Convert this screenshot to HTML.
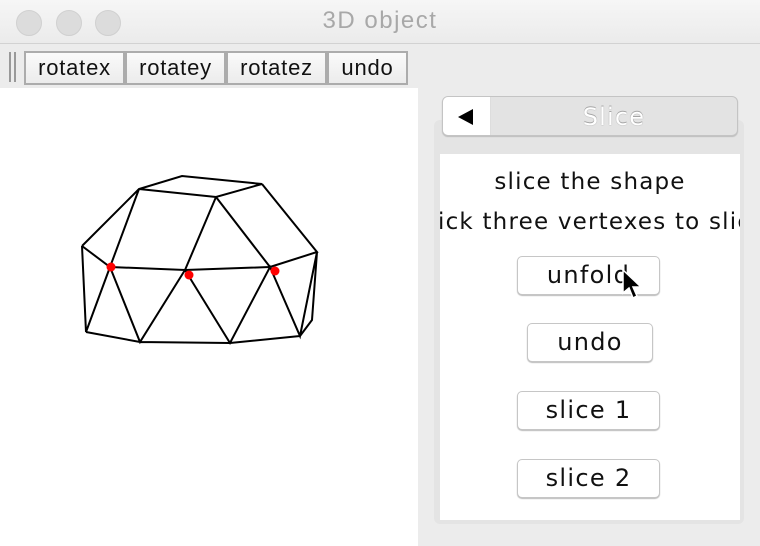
<!DOCTYPE html>
<html><head><style>
body{margin:0;width:760px;height:546px;background:#ececec;font-family:"Liberation Sans",sans-serif;position:relative;overflow:hidden}
.abs{position:absolute}
.title{left:0;top:0;width:760px;height:43px;background:linear-gradient(#f6f6f6,#ebebeb);border-bottom:1px solid #d2d2d2}
.dot{top:10px;width:24px;height:24px;border-radius:50%;background:#dcdcdc;border:1px solid #d0d0d0}
.tb{top:51px;height:30px;border:2px solid #acacac;background:linear-gradient(#fafafa,#ececec);font-size:22px;letter-spacing:0.8px;line-height:30px;text-align:center;color:#111;box-sizing:content-box}
.btn{background:#fff;border:1px solid #c6c6c6;border-radius:5px;box-shadow:0 1px 1px #bbb;font-size:24px;letter-spacing:1.3px;text-align:center;line-height:37px;color:#111;font-family:"DejaVu Sans",sans-serif}
</style></head><body>
<div class="abs title"></div>
<div class="abs dot" style="left:16px"></div>
<div class="abs dot" style="left:56px"></div>
<div class="abs dot" style="left:95px"></div>
<div class="abs" style="left:0;width:760px;top:7px;text-align:center;font-size:24px;letter-spacing:1.5px;color:#a8a8a8">3D object</div>
<div class="abs" style="left:9px;top:52px;width:2px;height:30px;background:#999"></div>
<div class="abs" style="left:14px;top:52px;width:2px;height:30px;background:#999"></div>
<div class="abs tb" style="left:24px;width:97px">rotatex</div>
<div class="abs tb" style="left:125px;width:97px">rotatey</div>
<div class="abs tb" style="left:226px;width:97px">rotatez</div>
<div class="abs tb" style="left:327px;width:77px">undo</div>
<div class="abs" style="left:0;top:88px;width:418px;height:458px;background:#fff"></div>
<svg class="abs" style="left:0;top:0" width="418" height="546">
<g stroke="#000" stroke-width="2" fill="none">
<path d="M82 246L139 189L182 176L262 184L216 197L139 189M82 246L110 267L139 189M216 197L185 270L110 267M216 197L270 267L185 270M262 184L317 252L270 267M110 267L86 332L82 246M110 267L140 342L185 270L230 343L270 267L300 336L317 252L312 320L300 336M86 332L140 342L230 343L300 336"/>
</g>
<g fill="#f00"><circle cx="111" cy="267" r="4.5"/><circle cx="189" cy="275" r="4.5"/><circle cx="275" cy="271" r="4.5"/></g>
</svg>
<div class="abs" style="left:434px;top:120px;width:310px;height:404px;background:#e4e4e4;border-radius:6px"></div>
<div class="abs" style="left:440px;top:154px;width:300px;height:366px;background:#fff;overflow:hidden;font-family:'DejaVu Sans',sans-serif;font-size:23px;letter-spacing:1.2px;color:#111">
<div class="abs" style="left:0;width:300px;top:15px;text-align:center">slice the shape</div>
<div class="abs" style="left:-2px;top:55px;white-space:nowrap">ick three vertexes to slice</div>
</div>
<div class="abs" style="left:442px;top:96px;width:294px;height:38px;border:1px solid #c4c4c4;border-radius:6px;background:#e3e3e3;box-shadow:0 1px 1px #bbb;overflow:hidden">
<div class="abs" style="left:0;top:0;width:47px;height:38px;background:#fff;border-right:1px solid #ddd"></div>
<svg class="abs" style="left:15px;top:12px" width="16" height="16"><path d="M0 8L15 0V16Z" fill="#000"/></svg>
<div class="abs" style="left:48px;width:246px;top:6px;text-align:center;font-size:24px;letter-spacing:1.2px;color:#fff;text-shadow:0 0 1px #888,0 -1px 0 #aaa;font-family:'DejaVu Sans',sans-serif">Slice</div>
</div>
<div class="abs btn" style="left:517px;top:256px;width:141px;height:37px">unfold</div>
<div class="abs btn" style="left:527px;top:323px;width:124px;height:37px">undo</div>
<div class="abs btn" style="left:517px;top:391px;width:141px;height:37px">slice 1</div>
<div class="abs btn" style="left:517px;top:459px;width:141px;height:37px">slice 2</div>
<svg class="abs" style="left:620px;top:268px" width="26" height="34"><path d="M3 2V25L9 20L13 30L17 28L13 19H21Z" fill="#000" stroke="#fff" stroke-width="1.5"/></svg>
</body></html>
